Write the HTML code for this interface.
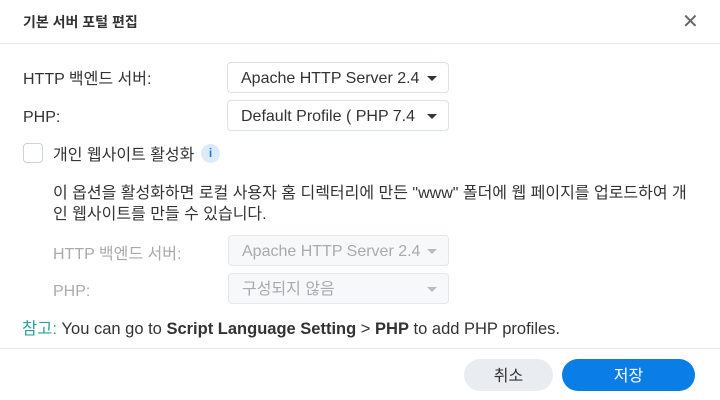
<!DOCTYPE html>
<html><head><meta charset="utf-8"><style>
*{box-sizing:border-box;margin:0;padding:0}
body{width:720px;height:400px;background:#fff;font-family:"Liberation Sans","Noto Sans CJK KR",sans-serif;color:#333;position:relative;overflow:hidden}
.a{position:absolute;white-space:nowrap;line-height:20px}
.title{left:23px;top:12px;font-size:14px;font-weight:bold;color:#333}
.close{left:682px;top:12px;font-size:20px;color:#666}
.hr{position:absolute;left:0;width:720px;height:1px;background:#e6e9ed}
.lbl{font-size:16px;color:#333}
.sel{position:absolute;border:1px solid #dde2e8;border-radius:4px;height:31px;font-size:16px;line-height:31px;padding:0 0 0 13px;color:#333;white-space:nowrap}
.sel .c{position:absolute;right:11px;top:13px;width:0;height:0;border-left:5px solid transparent;border-right:5px solid transparent;border-top:5px solid #333}
.dis{background:#f7f8fa;color:#aaa;border-color:#e4e7eb}
.dis .c{border-top-color:#bbb}
.btn{position:absolute;top:359px;height:32px;border-radius:16px;font-size:16px;text-align:center;line-height:20px;padding-top:8px}
</style></head><body>
<div class="a title">기본 서버 포털 편집</div>
<div class="a close">✕</div>
<div class="hr" style="top:43px"></div>
<div class="a lbl" style="left:23px;top:70px">HTTP 백엔드 서버:</div>
<div class="sel" style="left:227px;top:62px;width:222px">Apache HTTP Server 2.4<span class="c"></span></div>
<div class="a lbl" style="left:23px;top:108px">PHP:</div>
<div class="sel" style="left:227px;top:100px;width:222px">Default Profile ( PHP 7.4<span class="c"></span></div>
<div class="a" style="left:23px;top:143px;width:20px;height:20px;border:1px solid #ccd2d9;border-radius:4px"></div>
<div class="a lbl" style="left:53px;top:146px">개인 웹사이트 활성화</div>
<div class="a" style="left:201px;top:144px;width:19px;height:19px;border-radius:50%;background:#dcebfa;color:#1a7ee0;font-size:12px;font-weight:bold;text-align:center;line-height:19px">i</div>
<div class="a lbl" style="left:53px;top:183px;line-height:21px">이 옵션을 활성화하면 로컬 사용자 홈 디렉터리에 만든 "www" 폴더에 웹 페이지를 업로드하여 개<br>인 웹사이트를 만들 수 있습니다.</div>
<div class="a lbl" style="left:53px;top:245px;color:#aaa">HTTP 백엔드 서버:</div>
<div class="sel dis" style="left:228px;top:235px;width:221px">Apache HTTP Server 2.4<span class="c"></span></div>
<div class="a lbl" style="left:53px;top:282px;color:#aaa">PHP:</div>
<div class="sel dis" style="left:228px;top:273px;width:221px">구성되지 않음<span class="c"></span></div>
<div class="a lbl" style="left:22px;top:319px;font-size:16.5px"><span style="color:#2aa39a">참고:</span> You can go to <b>Script Language Setting</b> &gt; <b>PHP</b> to add PHP profiles.</div>
<div class="hr" style="top:348px"></div>
<div class="btn" style="left:464px;width:89px;background:#e9edf1;color:#333">취소</div>
<div class="btn" style="left:562px;width:133px;background:#0a7de6;color:#fff">저장</div>
</body></html>
